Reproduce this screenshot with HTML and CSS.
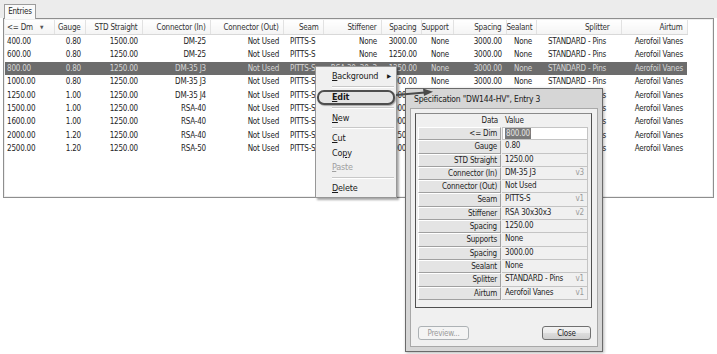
FILE: index.html
```html
<!DOCTYPE html>
<html>
    <head>
        <meta charset="utf-8">
        <title>Entries</title>
        <link rel="stylesheet" href="styles.css">
    </head>
    <body>

        <div class="tabbar">
            <span class="tab">Entries</span>
        </div>

        <div class="panel">
            <div class="list">
                <table class="entries">
                    <colgroup>
                        <col style="width:49px"><col style="width:31px"><col style="width:57px">
                        <col style="width:68px"><col style="width:73px"><col style="width:40px">
                        <col style="width:58px"><col style="width:40px"><col style="width:32px">
                        <col style="width:53px"><col style="width:30px"><col style="width:85px">
                        <col style="width:66px">
                    </colgroup>
                    <thead>
                        <tr>
                            <th class="c-dim">&lt;= Dm <span class="sort">&#9660;</span></th>
                            <th>Gauge</th>
                            <th>STD Straight</th>
                            <th>Connector (In)</th>
                            <th>Connector (Out)</th>
                            <th>Seam</th>
                            <th>Stiffener</th>
                            <th>Spacing</th>
                            <th>Support</th>
                            <th>Spacing</th>
                            <th>Sealant</th>
                            <th class="c-split">Splitter</th>
                            <th>Airtum</th>
                        </tr>
                    </thead>
                    <tbody>
                        <tr>
                            <td class="c-dim">400.00</td><td>0.80</td><td>1500.00</td><td>DM-25</td><td>Not Used</td>
                            <td class="c-seam">PITTS-S</td><td>None</td><td>3000.00</td><td>None</td><td>3000.00</td>
                            <td>None</td><td class="c-split">STANDARD - Pins</td><td>Aerofoil Vanes</td>
                        </tr>
                        <tr>
                            <td class="c-dim">600.00</td><td>0.80</td><td>1250.00</td><td>DM-25</td><td>Not Used</td>
                            <td class="c-seam">PITTS-S</td><td>None</td><td>1250.00</td><td>None</td><td>3000.00</td>
                            <td>None</td><td class="c-split">STANDARD - Pins</td><td>Aerofoil Vanes</td>
                        </tr>
                        <tr class="selected">
                            <td class="c-dim">800.00</td><td>0.80</td><td>1250.00</td><td>DM-35 J3</td><td>Not Used</td>
                            <td class="c-seam">PITTS-S</td><td>RSA 30x30x3</td><td>1250.00</td><td>None</td><td>3000.00</td>
                            <td>None</td><td class="c-split">STANDARD - Pins</td><td>Aerofoil Vanes</td>
                        </tr>
                        <tr>
                            <td class="c-dim">1000.00</td><td>0.80</td><td>1250.00</td><td>DM-35 J3</td><td>Not Used</td>
                            <td class="c-seam">PITTS-S</td><td>None</td><td>3000.00</td><td>None</td><td>3000.00</td>
                            <td>None</td><td class="c-split">STANDARD - Pins</td><td>Aerofoil Vanes</td>
                        </tr>
                        <tr>
                            <td class="c-dim">1250.00</td><td>1.00</td><td>1250.00</td><td>DM-35 J4</td><td>Not Used</td>
                            <td class="c-seam">PITTS-S</td><td>None</td><td>3000.00</td><td>None</td><td>3000.00</td>
                            <td>None</td><td class="c-split">STANDARD - Pins</td><td>Aerofoil Vanes</td>
                        </tr>
                        <tr>
                            <td class="c-dim">1500.00</td><td>1.00</td><td>1250.00</td><td>RSA-40</td><td>Not Used</td>
                            <td class="c-seam">PITTS-S</td><td>None</td><td>3000.00</td><td>None</td><td>3000.00</td>
                            <td>None</td><td class="c-split">STANDARD - Pins</td><td>Aerofoil Vanes</td>
                        </tr>
                        <tr>
                            <td class="c-dim">1600.00</td><td>1.00</td><td>1250.00</td><td>RSA-40</td><td>Not Used</td>
                            <td class="c-seam">PITTS-S</td><td>None</td><td>3000.00</td><td>None</td><td>3000.00</td>
                            <td>None</td><td class="c-split">STANDARD - Pins</td><td>Aerofoil Vanes</td>
                        </tr>
                        <tr>
                            <td class="c-dim">2000.00</td><td>1.20</td><td>1250.00</td><td>RSA-40</td><td>Not Used</td>
                            <td class="c-seam">PITTS-S</td><td>None</td><td>1250.00</td><td>None</td><td>3000.00</td>
                            <td>None</td><td class="c-split">STANDARD - Pins</td><td>Aerofoil Vanes</td>
                        </tr>
                        <tr>
                            <td class="c-dim">2500.00</td><td>1.20</td><td>1250.00</td><td>RSA-50</td><td>Not Used</td>
                            <td class="c-seam">PITTS-S</td><td>None</td><td>3000.00</td><td>None</td><td>3000.00</td>
                            <td>None</td><td class="c-split">STANDARD - Pins</td><td>Aerofoil Vanes</td>
                        </tr>
                    </tbody>
                </table>
            </div>
        </div>

        <!-- popup menu over the list -->
        <div class="menu">
            <div class="item"><u>B</u>ackground <span class="sub">&#9654;</span></div>
            <div class="sep"></div>
            <div class="item edit"><u>E</u>dit</div>
            <div class="sep"></div>
            <div class="item"><u>N</u>ew</div>
            <div class="sep"></div>
            <div class="item"><u>C</u>ut</div>
            <div class="item">Co<u>p</u>y</div>
            <div class="item disabled"><u>P</u>aste</div>
            <div class="sep"></div>
            <div class="item"><u>D</u>elete</div>
        </div>

        <svg class="pointer" width="44" height="14" viewBox="0 0 44 14">
            <path d="M1 9 L30 6.5" stroke="#4a4a4a" stroke-width="2" fill="none"/>
            <path d="M28 2.5 L38 5.8 L29 10 Z" fill="#4a4a4a"/>
        </svg>

        <!-- edit dialog -->
        <div class="dialog">
            <div class="dialog-title">Specification "DW144-HV", Entry 3</div>
            <div class="dialog-body">
                <div class="props">
                    <div class="props-head">
                        <span class="lbl">Data</span>
                        <span class="val">Value</span>
                    </div>
                    <div class="prop"><span class="lbl">&lt;= Dim</span><span class="val editing"><span class="sel">800.00</span></span></div>
                    <div class="prop"><span class="lbl">Gauge</span><span class="val">0.80</span></div>
                    <div class="prop"><span class="lbl">STD Straight</span><span class="val">1250.00</span></div>
                    <div class="prop"><span class="lbl">Connector (In)</span><span class="val">DM-35 J3<i>v3</i></span></div>
                    <div class="prop"><span class="lbl">Connector (Out)</span><span class="val">Not Used</span></div>
                    <div class="prop"><span class="lbl">Seam</span><span class="val">PITTS-S<i>v1</i></span></div>
                    <div class="prop"><span class="lbl">Stiffener</span><span class="val">RSA 30x30x3<i>v2</i></span></div>
                    <div class="prop"><span class="lbl">Spacing</span><span class="val">1250.00</span></div>
                    <div class="prop"><span class="lbl">Supports</span><span class="val">None</span></div>
                    <div class="prop"><span class="lbl">Spacing</span><span class="val">3000.00</span></div>
                    <div class="prop"><span class="lbl">Sealant</span><span class="val">None</span></div>
                    <div class="prop"><span class="lbl">Splitter</span><span class="val">STANDARD - Pins<i>v1</i></span></div>
                    <div class="prop"><span class="lbl">Airtum</span><span class="val">Aerofoil Vanes<i>v1</i></span></div>
                </div>
                <div class="buttons">
                    <button class="btn" disabled>Preview...</button>
                    <button class="btn close">Close</button>
                </div>
            </div>
        </div>

    </body>
</html>
```

FILE: styles.css
```css
body {
    margin: 0;
    background: #FFFFFF;
    font-family: "DejaVu Sans Condensed", "Liberation Sans", sans-serif;
    font-size: 8px;
    letter-spacing: -0.2px;
    color: #1E1E1E;
}

/* tab strip + list panel */
.tabbar {
    height: 14px;
    padding: 4px 0 0 4px;
    background: #ECECEC;
}

.tab {
    display: inline-block;
    width: 30px;
    height: 14px;
    line-height: 14px;
    border: 1px solid #9C9C9C;
    border-bottom: none;
    background: #FAFAFA;
    text-align: center;
    position: relative;
    z-index: 1;
}

.panel {
    margin: 0 3px;
    height: 176px;
    border: 1px solid #8E8E8E;
    padding: 1px;
    background: #EEEEEE;
}

.list {
    height: 100%;
    background: #FFFFFF;
    overflow: hidden;
}

.entries {
    table-layout: fixed;
    width: 682px;
    border-collapse: collapse;
    white-space: nowrap;
}

.entries th, .entries td {
    padding: 0 4px 0 0;
    text-align: right;
    overflow: hidden;
}

.entries th {
    height: 14px;
    font-weight: normal;
    color: #333333;
    background: linear-gradient(#FFFFFF, #F4F4F4);
    border-right: 1px solid #E2E2E2;
    border-bottom: 1px solid #D8D8D8;
}

.entries td {
    height: 13.4px;
    line-height: 13.4px;
}

.entries .c-dim {
    text-align: left;
    padding-left: 2px;
}

.entries th.c-dim {
    position: relative;
}

.sort {
    position: absolute;
    left: 35px;
    top: 4px;
    font-size: 5px;
    color: #555555;
}

.entries td.c-seam {
    text-align: left;
    padding-left: 7px;
}

.entries th.c-split {
    padding-right: 11px;
}

.entries td.c-split {
    text-align: left;
    padding-left: 12px;
}

.entries tr.selected td {
    background: #6C6C6C;
    color: #D6D6D6;
}

/* context menu */
.menu {
    position: absolute;
    left: 315px;
    top: 66px;
    width: 80px;
    padding: 2px 0;
    border: 1px solid #979797;
    background: #F0F0F0;
    box-shadow: 2px 2px 2px rgba(0, 0, 0, 0.35);
    font-size: 9px;
    color: #1A1A1A;
}

.menu .item {
    height: 14.5px;
    line-height: 14.5px;
    padding-left: 16px;
    position: relative;
}

.menu .sub {
    position: absolute;
    right: 5px;
    top: 0;
    font-size: 6px;
}

.menu .edit {
    margin: 0 1px;
    padding-left: 13px;
    height: 11px;
    line-height: 11px;
    border: 2px solid #4E4E4E;
    border-radius: 7px;
    background: #E4E4E4;
    font-weight: bold;
    box-shadow: 1px 1px 1px rgba(0, 0, 0, 0.3);
}

.menu .disabled {
    color: #A0A0A0;
}

.menu .sep {
    height: 0;
    margin: 2px 2px 2px 16px;
    border-top: 1px solid #C8C8C8;
    border-bottom: 1px solid #FFFFFF;
}

.pointer {
    position: absolute;
    left: 395px;
    top: 86px;
    z-index: 3;
}

/* edit dialog */
.dialog {
    position: absolute;
    left: 405px;
    top: 88px;
    width: 196px;
    height: 262px;
    border: 1px solid #6A6A6A;
    background: #D6D6D6;
    box-shadow: 1px 1px 3px rgba(0, 0, 0, 0.3);
    display: flex;
    flex-direction: column;
}

.dialog-title {
    height: 19px;
    line-height: 21px;
    padding-left: 8px;
    font-size: 8.5px;
    color: #202020;
}

.dialog-body {
    flex: 1;
    margin: 0 4px 4px;
    border: 1px solid #A8A8A8;
    background: #F0F0F0;
    padding: 4px 5px 6px 4px;
    display: flex;
    flex-direction: column;
}

.props {
    height: 192px;
    border: 1px solid #505050;
    border-top-color: #8A8A8A;
    background: #F0F0F0;
    padding: 1px 2px 0 2px;
}

.props-head, .prop {
    display: flex;
    gap: 1px;
}

.props-head {
    height: 12px;
    line-height: 12px;
}

.prop {
    height: 13.3px;
}

.lbl {
    box-sizing: border-box;
    width: 83px;
    padding-right: 3px;
    text-align: right;
    white-space: nowrap;
}

.val {
    box-sizing: border-box;
    width: 86px;
    padding-left: 3px;
    display: flex;
    white-space: nowrap;
}

.prop .lbl {
    line-height: 11.3px;
    border: 1px solid;
    border-color: #FFFFFF #A0A0A0 #A0A0A0 #FFFFFF;
    background: #E4E4E4;
}

.prop .val {
    line-height: 12.3px;
    border-bottom: 1px solid #C4C4C4;
    border-right: 1px solid #C4C4C4;
}

.prop .val i {
    margin-left: auto;
    padding-right: 3px;
    font-style: normal;
    color: #9A9A9A;
}

.prop .editing {
    background: #FFFFFF;
    border: 1px solid #C4C4C4;
    padding-left: 2px;
    line-height: 11.3px;
}

.sel {
    background: #7A7A7A;
    color: #E4E4E4;
    padding: 0 1px;
}

.buttons {
    margin-top: auto;
    display: flex;
    justify-content: space-between;
    padding: 0 1px 0 3px;
}

.btn {
    box-sizing: border-box;
    height: 14px;
    padding: 0;
    border: 1px solid #707070;
    border-radius: 3px;
    background: linear-gradient(#F3F3F3, #EBEBEB 50%, #DDDDDD 50%, #CFCFCF);
    font-family: inherit;
    font-size: 8px;
    letter-spacing: -0.2px;
    color: #1E1E1E;
    width: 49px;
}

.btn:disabled {
    width: 51px;
    border-color: #ADB2B5;
    background: #F4F4F4;
    color: #9A9A9A;
}
```
